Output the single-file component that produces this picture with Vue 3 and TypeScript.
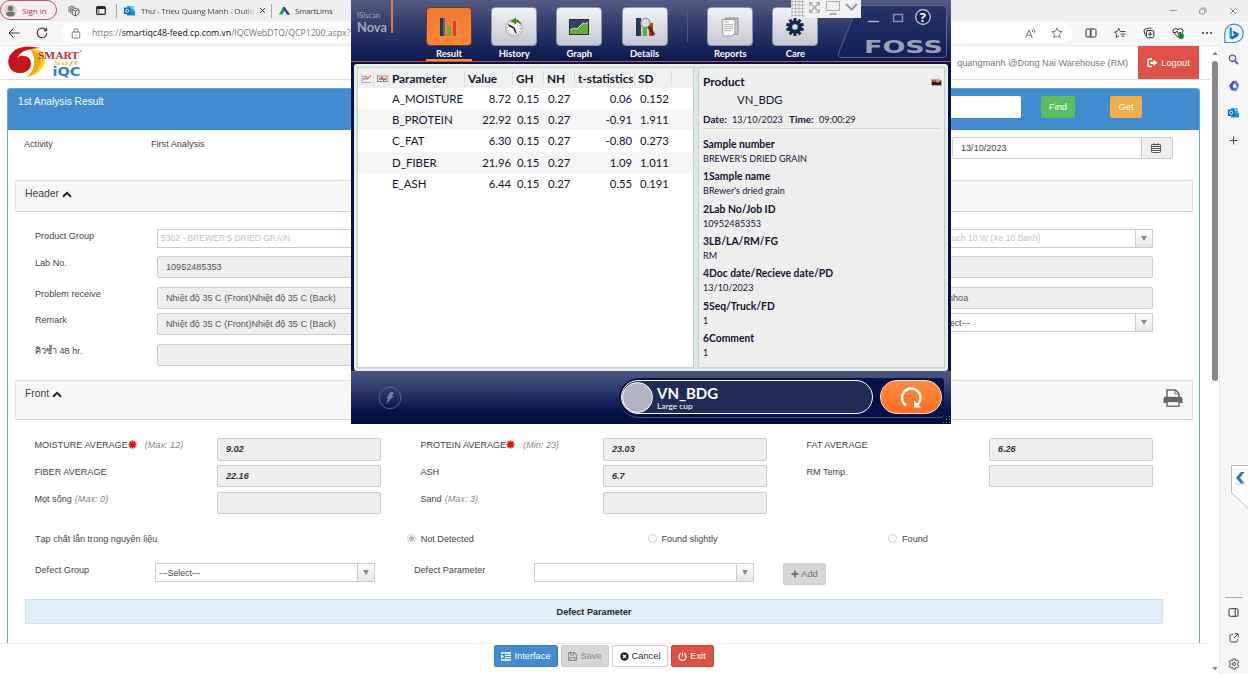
<script setup lang="ts">
interface Field { label: string; value: string; kind: 'input' | 'select' | 'muted' }
interface Average { label: string; hint: string; required: boolean; value: string }

const leftFields: Field[] = [
  { label: 'Product Group', value: "5302 - BREWER'S DRIED GRAIN", kind: 'muted' },
  { label: 'Lab No.', value: '10952485353', kind: 'input' },
  { label: 'Problem receive', value: 'Nhiệt độ 35 C (Front)Nhiệt độ 35 C (Back)', kind: 'input' },
  { label: 'Remark', value: 'Nhiệt độ 35 C (Front)Nhiệt độ 35 C (Back)', kind: 'input' },
  { label: 'คิวซ้ำ 48 hr.', value: '', kind: 'input' },
]
const rightFields: Field[] = [
  { label: '', value: 'uch 10 W (Xe 10 Banh)', kind: 'muted' },
  { label: '', value: '', kind: 'input' },
  { label: '', value: 'nhoa', kind: 'input' },
  { label: '', value: 'lect---', kind: 'select' },
]
const averages: Average[] = [
  { label: 'MOISTURE AVERAGE', hint: '(Max: 12)', required: true, value: '9.02' },
  { label: 'PROTEIN AVERAGE', hint: '(Min: 23)', required: true, value: '23.03' },
  { label: 'FAT AVERAGE', hint: '', required: false, value: '6.26' },
  { label: 'FIBER AVERAGE', hint: '', required: false, value: '22.16' },
  { label: 'ASH', hint: '', required: false, value: '6.7' },
  { label: 'RM Temp.', hint: '', required: false, value: '' },
  { label: 'Mọt sống', hint: '(Max: 0)', required: false, value: '' },
  { label: 'Sand', hint: '(Max: 3)', required: false, value: '' },
]
const results = [
  ['A_MOISTURE', '8.72', '0.15', '0.27', '0.06', '0.152'],
  ['B_PROTEIN', '22.92', '0.15', '0.27', '-0.91', '1.911'],
  ['C_FAT', '6.30', '0.15', '0.27', '-0.80', '0.273'],
  ['D_FIBER', '21.96', '0.15', '0.27', '1.09', '1.011'],
  ['E_ASH', '6.44', '0.15', '0.27', '0.55', '0.191'],
]
const details = [
  ['Sample number', "BREWER'S DRIED GRAIN"],
  ['1Sample name', "BRewer's dried grain"],
  ['2Lab No/Job ID', '10952485353'],
  ['3LB/LA/RM/FG', 'RM'],
  ['4Doc date/Recieve date/PD', '13/10/2023'],
  ['5Seq/Truck/FD', '1'],
  ['6Comment', '1'],
]
const tools = ['Result', 'History', 'Graph', 'Details', 'Reports', 'Care']
const teeth = [0, 36, 72, 108, 144, 180, 216, 252, 288, 324]
</script>

<template>
  <div class="shell">
    <header class="titlebar">
      <div class="signin">
        <svg width="13" height="13" viewBox="0 0 13 13"><circle cx="6.5" cy="6.5" r="6.3" fill="#d5d2d0" /><circle cx="6.5" cy="4.4" r="2.6" fill="#77716e" /><path d="M2.2 11Q2 7.8 4 7.8H9Q11 7.8 10.8 11Q6.500 14 2.200 11Z" fill="#77716e" /></svg>
        <span>Sign in</span>
      </div>
      <svg class="t-work" width="12" height="12" viewBox="0 0 12 12" fill="none" stroke="#555" stroke-width=".9"><path d="M4 4.500 8 3 11 4.500V8.500L7.500 11 4.500 9.500ZM4 4.500 7.500 6 11 4.500M7.500 6V11M2.800 8.500V3.300L7 1.600M1 7V2.300L5 .7" /></svg>
      <svg class="t-tabs" width="10" height="9" viewBox="0 0 10 9"><rect x=".7" y=".7" width="8.6" height="7.600" rx="1" fill="none" stroke="#222" stroke-width="1.200" /><path d="M.7 1H9.300V3H.7Z" fill="#222" /><path d="M2.800 3V8" stroke="#222" stroke-width=".7" /></svg>
      <i class="sep s1"></i>
      <svg class="t-outlook" width="11" height="11" viewBox="0 0 11 11"><path d="M3 1H10V7H3Z" fill="#28a8ea" /><path d="M6 1H10V4H6Z" fill="#50d9ff" /><path d="M3 6H11V10.500H3Z" fill="#1490df" /><rect y="2.500" width="6.500" height="6.500" rx=".6" fill="#0764b8" /><circle cx="3.200" cy="5.700" r="1.600" fill="none" stroke="#fff" /></svg>
      <span class="tab-outlook">Thư - Trieu Quang Manh - Outlo</span>
      <svg class="t-x" width="7" height="7" viewBox="0 0 7 7"><path d="M1 1 6 6M6 1 1 6" stroke="#444" /></svg>
      <i class="sep s2"></i>
      <svg class="t-lims" width="11" height="10" viewBox="0 0 11 10"><path d="M0 8.500 4.200.8 6 4 3.500 8.500Z" fill="#1e9b5a" /><path d="M3.800 1.500Q5 0 6 1.500L11 8.500Q8.500 9.800 7.300 7.500Z" fill="#12408a" /></svg>
      <span class="tab-lims">SmartLims</span>
      <div class="win-controls">
        <svg width="7" height="9" viewBox="0 0 7 9"><path d="M0 4.500H7" stroke="#999" /></svg>
        <svg width="8" height="8" viewBox="0 0 8 8" fill="none" stroke="#888" stroke-width=".9"><rect x=".7" y="2" width="5" height="5" rx="1" /><path d="M2.500 1H5.500Q7 1 7 2.500V5.500" /></svg>
        <svg width="8" height="8" viewBox="0 0 8 8"><path d="M1 1 7 7M7 1 1 7" stroke="#888" /></svg>
      </div>
    </header>

    <div class="addressbar">
      <svg class="a-back" width="12" height="10" viewBox="0 0 12 10" fill="none" stroke="#333"><path d="M11.500 5H1M5.200.8 1 5 5.200 9.200" /></svg>
      <svg class="a-reload" width="12" height="12" viewBox="0 0 12 12" fill="none" stroke="#333" stroke-width="1.100"><path d="M10.800 6A4.800 4.800 0 1 1 9 2.200L10.500 3.600M10.600.7V3.700H7.600" /></svg>
      <div class="url">
        <svg width="10" height="11" viewBox="0 0 10 11" fill="none" stroke="#666" stroke-width=".9"><rect x="1.200" y="4" width="7.600" height="6" rx="1" /><path d="M3 4V2.500Q3 .8 5 .8T7 2.500V4" /><circle cx="5" cy="7" r=".6" fill="#666" stroke="none" /></svg>
        <span>https://<b>smartiqc48-feed.cp.com.vn</b>/IQCWebDTO/QCP1200.aspx?</span>
        <svg class="a-read" width="11" height="11" viewBox="0 0 11 11" fill="none" stroke="#666" stroke-width=".9"><path d="M.7 10 4 2 7.300 10M1.800 7.200H6.200M6.700 1.500Q8 2.500 7.500 4M8.500.5Q10.500 2.500 9.500 5" /></svg>
        <svg class="a-star" width="12" height="12" viewBox="0 0 12 12" fill="none" stroke="#666" stroke-width=".9"><path d="M6 .9 7.500 4.200 11.200 4.600 8.400 7 9.200 10.700 6 8.800 2.800 10.700 3.600 7 .8 4.600 4.500 4.200Z" /></svg>
      </div>
      <div class="edge-tools">
        <svg width="12" height="12" viewBox="0 0 12 12" fill="none" stroke="#333"><rect x="1" y="2" width="4.300" height="8" rx="1" /><path d="M6.700 2H9.500Q11 2 11 3.500V8.500Q11 10 9.500 10H6.700M6 .8V11.200" /></svg>
        <svg width="12" height="12" viewBox="0 0 12 12" fill="none" stroke="#333" stroke-width=".9"><path d="M8 4.500H6.300L4.800 1.400 3.300 4.500.5 5 2.700 7.200 2.200 10.400 5 9M7.800 4.500H11.500M6.500 7H11.500M7.500 9.300H10" /></svg>
        <svg width="12" height="12" viewBox="0 0 12 12" fill="none" stroke="#333"><rect x="3.500" y="3.500" width="7.300" height="7.300" rx="1.500" /><path d="M5 7.100H9.300M7.100 5V9.200M2.500 8.500 1 4Q.7 2.800 1.800 2.500L6.500 1Q8 .7 8.500 2" /></svg>
        <svg width="12" height="12" viewBox="0 0 12 12" fill="none" stroke="#333"><path d="M6 10.300 1.700 6Q.2 4 1.700 2.200 3.800.6 6 2.700 8.200.6 10.300 2.200 11.800 4 10.300 6M1 5.500H4L5 4 6.500 7 7.500 5.500H9" /><circle cx="9" cy="9" r="2.900" fill="#1a8038" stroke="none" /></svg>
        <svg width="12" height="12" viewBox="0 0 12 12" fill="#333"><circle cx="2" cy="6" r="1" /><circle cx="6" cy="6" r="1" /><circle cx="10" cy="6" r="1" /></svg>
      </div>
    </div>

    <div class="workspace">
      <main class="page">
        <div class="page-scroll">
          <div class="brandbar">
            <svg class="brand" width="76" height="33" viewBox="0 0 76 33">
              <path d="M22 3Q36 2 37 13Q36 28 19 31Q31 24 29 14Q28 6 22 3Z" fill="#f8d81c" />
              <path d="M22 3Q37 8 31 21Q28 28 19 31Q27 24 26 14Q26 8 22 3Z" fill="#eda51a" />
              <path d="M32 2Q16-2 7 4Q-2 11 1 20Q4 28 14 27Q23 25 23 17Q22 10 16 10Q10 9 9 14Q10 3 32 2Z" fill="#c5161d" />
              <text x="30" y="12.500" class="logo-smart" textLength="41" lengthAdjust="spacingAndGlyphs">SMART</text>
              <path d="M72 5H73.500" stroke="#c52a2d" />
              <text x="45" y="19" class="logo-soft" textLength="25" lengthAdjust="spacingAndGlyphs">Soft</text>
              <text x="44.500" y="30" class="logo-iqc" textLength="28" lengthAdjust="spacingAndGlyphs">iQC</text>
            </svg>
            <span class="user">quangmanh @Dong Nai Warehouse (RM)</span>
            <button class="logout">
              <svg width="11" height="10" viewBox="0 0 11 10"><path d="M5 1H2.500Q1 1 1 2.500V7Q1 8.500 2.500 8.500H5" fill="none" stroke="#fff" stroke-width="1.500" /><path d="M3.500 3.700H6.300V1.500L10.500 4.800 6.300 8.100V6H3.500Z" fill="#fff" /></svg>Logout
            </button>
          </div>
          <section class="panel">
            <div class="panel-head">
              <span>1st Analysis Result</span>
              <div class="search"></div>
              <button class="btn find">Find</button>
              <button class="btn get">Get</button>
            </div>
            <div class="activity">
              <span class="act-l">Activity</span><span class="act-v">First Analysis</span>
              <div class="date"><span>13/10/2023</span><i><svg width="10" height="10" viewBox="0 0 10 10" fill="none" stroke="#444" stroke-width=".9"><rect x=".5" y="1.500" width="9" height="8" rx=".8" /><path d="M.5 3.500H9.500M.5 5.500H9.500M.5 7.500H9.500M3 .3V2.500M7 .3V2.500" /></svg></i></div>
            </div>
            <div class="fold fold-header">Header <svg width="10" height="7" viewBox="0 0 10 7"><path d="M1 5.800 5 1.900 9 5.800" fill="none" stroke="#222" stroke-width="2" /></svg></div>
            <div class="form">
              <div class="col-left">
                <div v-for="(f, i) in leftFields" :key="i" class="frow" :class="'r' + i">
                  <label>{{ f.label }}</label><div class="field" :class="f.kind">{{ f.value }}</div>
                </div>
              </div>
              <div class="col-right">
                <div v-for="(f, i) in rightFields" :key="i" class="frow" :class="'r' + i">
                  <div class="field" :class="f.kind"><span>{{ f.value }}</span><i v-if="f.kind !== 'input'" class="drop"></i></div>
                </div>
              </div>
            </div>
            <div class="fold fold-front">Front <svg width="10" height="7" viewBox="0 0 10 7"><path d="M1 5.800 5 1.900 9 5.800" fill="none" stroke="#222" stroke-width="2" /></svg>
              <svg class="printer" width="20" height="18" viewBox="0 0 20 18"><path d="M4 8V1H12.500L16 4.500V8" fill="#fff" stroke="#666" stroke-width="1.500" /><path d="M12 1V5H16" fill="none" stroke="#666" /><path d="M.5 14V10Q.5 7.800 2.500 7.800H17.500Q19.500 7.800 19.500 10V14Z" fill="#666" /><rect x="4" y="12.500" width="12" height="4.700" fill="#fff" stroke="#666" stroke-width="1.400" /></svg>
            </div>
            <div class="averages">
              <div v-for="a in averages" :key="a.label" class="avg">
                <div class="avg-l"><span>{{ a.label }}</span><svg v-if="a.required" width="9" height="9" viewBox="-4.500 -4.500 9 9"><path d="M0-4V4M-4 0H4M-2.800-2.800 2.800 2.800M2.800-2.800-2.800 2.800" stroke="#f00e0e" stroke-width="1.900" /></svg><em :class="{ wide: a.required }">{{ a.hint }}</em></div>
                <div class="field input strong">{{ a.value }}</div>
              </div>
            </div>
            <div class="radios">
              <span class="q">Tạp chất lẫn trong nguyên liệu</span>
              <span class="radio"><i class="on"></i>Not Detected</span>
              <span class="radio"><i></i>Found slightly</span>
              <span class="radio"><i></i>Found</span>
            </div>
            <div class="defects">
              <label class="d1">Defect Group</label>
              <div class="field select"><span>---Select---</span><i class="drop"></i></div>
              <label class="d2">Defect Parameter</label>
              <div class="field select"><span></span><i class="drop"></i></div>
              <button class="btn add"><svg width="8" height="8" viewBox="0 0 8 8"><path d="M4 .5V7.500M.5 4H7.500" stroke="#777" stroke-width="2" /></svg>Add</button>
            </div>
            <div class="table-head">Defect Parameter</div>
          </section>
          <footer class="actions">
            <button class="btn interface"><svg width="10" height="9" viewBox="0 0 10 9"><path d="M0 1H10M4 3.300H10M4 5.600H10M0 8H10" stroke="#fff" stroke-width="1.300" /><path d="M0 2.500 3 4.500 0 6.500Z" fill="#fff" /></svg>Interface</button>
            <button class="btn save"><svg width="9" height="9" viewBox="0 0 9 9" fill="none" stroke="#888"><path d="M.5.5H6.500L8.500 2.500V8.500H.5ZM2.500.5V3H6V.5M2 8.500V5.500H7V8.500" /></svg>Save</button>
            <button class="btn cancel"><svg width="9" height="9" viewBox="0 0 9 9"><circle cx="4.500" cy="4.500" r="4.200" fill="#222" /><path d="M3 3 6 6M6 3 3 6" stroke="#fff" stroke-width="1.300" /></svg>Cancel</button>
            <button class="btn exit"><svg width="9" height="9" viewBox="0 0 9 9" fill="none" stroke="#fff" stroke-width="1.200"><path d="M2.700 1.600A3.600 3.600 0 1 0 6.300 1.600M4.500.3V4.500" /></svg>Exit</button>
          </footer>
        </div>
        <div class="scrollbar">
          <svg width="6" height="5" viewBox="0 0 6 5"><path d="M3 .5 5.800 4H.2Z" fill="#888" /></svg>
          <i></i>
          <svg width="6" height="5" viewBox="0 0 6 5"><path d="M3 4.500 5.800 1H.2Z" fill="#888" /></svg>
        </div>
      </main>
      <aside class="sidebar">
        <svg class="sb1" width="11" height="11" viewBox="0 0 11 11"><circle cx="4.500" cy="4.300" r="3.200" fill="#dff1fa" stroke="#667" stroke-width="1.300" /><path d="M7 7 10 10" stroke="#a33bb8" stroke-width="1.800" /></svg>
        <svg class="sb2" width="12" height="12" viewBox="0 0 12 12"><path d="M5 .8H8.500L11.200 5.500 9.500 7.500 7 3.700H4Z" fill="#8a63e0" /><path d="M11.200 5.500 8.500 11H4.500L6 8.200 8 7.500Z" fill="#3d8fe8" /><path d="M5 .8 1 5.500 3.500 10.500 6.500 9.500 4.500 6 6 3.500Z" fill="#4750b4" /></svg>
        <svg class="sb3" width="11" height="11" viewBox="0 0 11 11"><path d="M3 1H10V7H3Z" fill="#28a8ea" /><path d="M6 1H10V4H6Z" fill="#50d9ff" /><path d="M3 6H11V10.500H3Z" fill="#1490df" /><rect y="2.500" width="6.500" height="6.500" rx=".6" fill="#0764b8" /><circle cx="3.200" cy="5.700" r="1.600" fill="none" stroke="#fff" /></svg>
        <svg class="sb4" width="9" height="9" viewBox="0 0 9 9"><path d="M4.500.5V8.500M.5 4.500H8.500" stroke="#444" /></svg>
        <i class="rule"></i>
        <svg class="sb5" width="11" height="9" viewBox="0 0 11 9" fill="none" stroke="#333"><rect x="1" y=".7" width="9" height="7.600" rx="1.200" /><path d="M7.200.7V8.300" /></svg>
        <svg class="sb6" width="10" height="10" viewBox="0 0 10 10" fill="none" stroke="#333" stroke-width=".9"><path d="M4 1.500H2.500Q1 1.500 1 3V7.500Q1 9 2.500 9H7Q8.500 9 8.500 7.500V6M5.500.8H9.200V4.500M9 1 5 5" /></svg>
        <svg class="sb7" width="12" height="12" viewBox="0 0 12 12" fill="none" stroke="#333" stroke-width=".9"><path d="M4.600 2.500 5.200.8H6.800L7.400 2.500 9.400 2 10.800 3.500 9.800 5V7L10.800 8.500 9.400 10 7.400 9.500 6.800 11.200H5.200L4.600 9.500 2.600 10 1.200 8.500 2.200 7V5L1.200 3.500 2.600 2Z" /><circle cx="6" cy="6" r="1.500" /></svg>
      </aside>
    </div>

    <svg class="bing" width="20" height="21" viewBox="0 0 20 21"><path d="M.8 19.500V10A9.200 9.200 0 1 1 10 19.500Z" fill="#edf7fd" stroke="#3c86cc" stroke-width="1.200" /><path d="M5.500 4 8 5V14L5.500 15Z" fill="#169bdf" /><path d="M8.500 7.500 14.500 10.200Q15.200 13 12.500 14.200L8 16.500 5.500 14.800 11 11.700 9.500 10.900Z" fill="#176bd0" /></svg>
    <svg class="side-tab" width="17" height="44" viewBox="0 0 17 44"><path d="M17 .5H.5V27.500L17 43.500" fill="#fff" stroke="#bbb" /><path d="M9.800 7H13.500L9 12.800 13.500 18.500H9.800L5 12.800Z" fill="#2080ae" /><path d="M4 19H14" stroke="#aac9dc" /></svg>

    <section class="nova">
      <div class="nova-top">
        <div class="nova-name"><small>ISIscan</small><strong>Nova</strong></div>
        <nav>
          <div v-for="t in tools" :key="t" class="tool" :class="t.toLowerCase()">
            <div class="tile">
              <svg v-if="t === 'Result'" width="20" height="20" viewBox="0 0 20 20"><path d="M1 1H6V19H1Z" fill="#263757" /><path d="M4 1H6V19H4Z" fill="#536a80" /><path d="M8 9H12V19H8Z" fill="#62ad37" /><path d="M14 4H19V19H14Z" fill="#dd4022" /><path d="M17 4H19V19H17Z" fill="#f58762" /></svg>
              <svg v-else-if="t === 'History'" width="20" height="20" viewBox="0 0 20 20"><circle cx="10" cy="11" r="8.300" fill="#f0f1ed" stroke="#aaa" /><circle cx="10" cy="11" r="6.600" fill="none" stroke="#666" stroke-dasharray="1 2.450" /><path d="M4.500 8 10 11 12 16" stroke="#222" stroke-width="1.500" fill="none" /><path d="M6.500 4 12 .5V2.500Q17 3 17 8Q15 5 12 5.300V7.500Z" fill="#478521" /></svg>
              <svg v-else-if="t === 'Graph'" width="20" height="16" viewBox="0 0 20 16"><rect x=".5" y=".5" width="19" height="15" fill="#344461" stroke="#222d40" /><path d="M1 11 5 9 8 10 14 4 16 5 19 3V15H1Z" fill="#66ad3c" /><path d="M1 11 5 9 8 10 14 4 16 5 19 3" fill="none" stroke="#cce3c0" /></svg>
              <svg v-else-if="t === 'Details'" width="20" height="20" viewBox="0 0 20 20"><path d="M1 1H6V19H1Z" fill="#263757" /><path d="M7.500 8H12V19H7.500Z" fill="#62ad37" /><path d="M14 6H18V19H14Z" fill="#b8391d" /><circle cx="10.500" cy="6" r="4.600" fill="#d8dfde" fill-opacity=".85" stroke="#8a9198" stroke-width="1.400" /><path d="M13.500 9.500 19 18" stroke="#632719" stroke-width="3" /></svg>
              <svg v-else-if="t === 'Reports'" width="18" height="20" viewBox="0 0 18 20"><path d="M4 1H17V17L4 19Z" fill="#c7c9ca" stroke="#888" /><path d="M1 2.500H14V16L11 19H2Z" fill="#f5f5f3" stroke="#999" /><path d="M3 5H8M3 7.500H12M3 9.500H12M3 11.500H12M3 13.500H10" stroke="#b5b5b5" /></svg>
              <svg v-else width="20" height="20" viewBox="-10 -10 20 20"><rect v-for="a in teeth" :key="a" x="-1.500" y="-9" width="3" height="5" fill="#14254f" :transform="`rotate(${a})`" /><circle r="4.800" fill="none" stroke="#14254f" stroke-width="4" /></svg>
            </div>
            <span>{{ t }}</span>
          </div>
        </nav>
        <svg class="foss" width="114" height="60" viewBox="0 0 114 60">
          <path d="M24 5.500H107Q110.500 5.500 110.500 9V53Q110.500 57.500 106 57.500H5Q1 57 3 52L20 10Q21 5.500 25 5.500Z" fill="#14235a" fill-opacity=".65" stroke="#59658e" />
          <path d="M32 21.500H43" stroke="#b9c0d2" stroke-width="1.300" /><rect x="57.500" y="14.500" width="9" height="7" fill="none" stroke="#8e96ad" stroke-width="1.400" /><circle cx="87" cy="17" r="7.300" fill="#17234e" stroke="#d1d5df" stroke-width="1.200" />
          <text x="83.800" y="21.800" class="foss-q">?</text><text x="28" y="53" class="foss-name" textLength="79" lengthAdjust="spacingAndGlyphs">FOSS</text>
        </svg>
      </div>
      <div class="nova-body">
        <div class="results">
          <div class="thead">
            <span class="ic"><svg width="11" height="9" viewBox="0 0 11 9" fill="none"><path d="M1 .5V8.500H10" stroke="#9ab" /><path d="M2 6 4 4 6 5 10 1.500" stroke="#d08060" stroke-width="1.200" /><path d="M2 3 5 2 8 5" stroke="#89a" /></svg></span>
            <span class="ic"><svg width="11" height="9" viewBox="0 0 11 9" fill="none"><path d="M.5 1V8M10 1V8M.5 2H10M.5 7.500H10" stroke="#998a84" /><path d="M2 5H4L5 3.500 6.500 6 8 5H9" stroke="#a34a35" stroke-width="1.300" /></svg></span>
            <span>Parameter</span><span>Value</span><span>GH</span><span>NH</span><span>t-statistics</span><span>SD</span><span></span>
          </div>
          <div v-for="r in results" :key="r[0]" class="trow"><span v-for="(c, i) in r" :key="i">{{ c }}</span></div>
        </div>
        <div class="product">
          <div class="product-head">
            <div class="ptitle"><b>Product</b><svg width="11" height="9" viewBox="0 0 11 9"><path d="M0 2H7L9 0 8 3H11V9H0Z" fill="#c0a491" /><path d="M1 4 4 3 6 6 10 4V8H1Z" fill="#20182a" /><path d="M1 3H4L6 5H1Z" fill="#d34a18" /></svg></div>
            <div class="pname">VN_BDG</div>
            <div class="pdate"><b>Date:</b><span>13/10/2023</span><b class="time">Time:</b><span>09:00:29</span></div>
          </div>
          <dl><div v-for="d in details" :key="d[0]"><dt>{{ d[0] }}</dt><dd>{{ d[1] }}</dd></div></dl>
        </div>
      </div>
      <div class="nova-bottom">
        <svg class="flash" width="24" height="24" viewBox="0 0 24 24"><circle cx="12" cy="12" r="10.800" fill="none" stroke="#5a6588" /><path d="M12 6H16L14 10H16L8 18 10 12.500H8.500Z" fill="#727c9d" /></svg>
        <div class="run">
          <div class="pill"><i></i><div><b>VN_BDG</b><span>Large cup</span></div></div>
          <div class="repeat"><svg width="26" height="24" viewBox="0 0 26 24"><path d="M8 20.500A9.300 9.300 0 1 1 18.500 20.500" fill="none" stroke="#fff" stroke-width="2.300" /><path d="M16 15.500V22.500H23Z" fill="#fff" /></svg></div>
        </div>
        <svg class="grip" width="8" height="8" viewBox="0 0 8 8" fill="#7d87a8"><path d="M6 0H7V1H6ZM6 3H7V4H6ZM3 3H4V4H3ZM6 6H7V7H6ZM3 6H4V7H3ZM0 6H1V7H0Z" /></svg>
      </div>
    </section>

    <div class="remote">
      <svg width="70" height="18" viewBox="0 0 70 18" fill="none"><path d="M1 0V17M4.500 0V17M8 0V17M11.500 0V17M0 1.500H13.500M0 5H13.500M0 8.500H13.500M0 12H13.500M0 15.500H13.500" stroke="#bbb" /><path d="M19 3 28 12M28 3 19 12" stroke="#aaa" stroke-width="1.500" /><path d="M18.500 6V2.500H22M25 2.500H28.500V6M28.500 9V12.500H25M22 12.500H18.500V9" stroke="#aaa" /><path d="M35.500 1.500H48.500V10.500H35.500ZM39 13.500H45M38 14.500H46" stroke="#aaa" /><path d="M55 4 60.500 9.500 66 4" stroke="#999" stroke-width="2" /></svg>
    </div>
  </div>
</template>

<style>
body { margin: 0; overflow: hidden; background: #fff; }
</style>
<style scoped>
* { box-sizing: border-box; }
svg { display: block; flex: none; }
button { font-family: inherit; font-size: inherit; margin: 0; padding: 0; }
.shell { position: relative; width: 1248px; height: 674px; overflow: hidden; font-family: "Liberation Sans", "Noto Sans", sans-serif; font-size: 9.1px; color: #444; }
.titlebar { height: 21px; background: #efefef; display: flex; align-items: center; font-family: "Open Sans", "Noto Sans", sans-serif; font-size: 8px; white-space: nowrap; }
.signin { width: 57px; height: 20px; margin-top: -1px; display: flex; align-items: center; gap: 5px; padding-left: 3px; border: 1px solid #b55b62; border-radius: 10px; background: #f5efef; color: #a33239; }
.t-work { margin-left: 11px; } .t-tabs { margin-left: 16px; }
.sep { width: 1px; height: 14px; background: #aaa; } .s1 { margin-left: 10px; } .s2 { margin-left: 5px; }
.t-outlook { margin-left: 7px; } .tab-outlook { width: 115px; margin-left: 6px; -webkit-mask-image: linear-gradient(90deg, #000 90%, transparent); letter-spacing: -.170px; }
.t-x { margin-left: 3px; } .t-lims { margin-left: 7px; } .tab-lims { margin-left: 5px; letter-spacing: -.250px; }
.win-controls { display: flex; gap: 22px; margin-left: auto; padding-right: 11px; align-items: center; }
.addressbar { height: 24px; background: #f7f7f7; display: flex; align-items: center; }
.a-back { margin-left: 8px; } .a-reload { margin-left: 16px; }
.url { width: 1012px; height: 20px; margin-left: 13px; background: #fff; border-radius: 10px; display: flex; align-items: center; padding: 0 10px; font-family: "Open Sans", "Noto Sans", sans-serif; font-size: 8.700px; color: #767676; }
.url span { margin-left: 11px; } .url b { font-weight: 400; color: #111; }
.a-read { margin-left: auto; } .a-star { margin-left: 15px; }
.edge-tools { display: flex; gap: 17px; margin-left: 12px; }
.workspace { display: flex; height: 629px; }
.page { width: 1219px; display: flex; border-top: 1px solid #e8e8e8; }
.page-scroll { width: 1210px; height: 628px; }
.scrollbar { width: 9px; display: flex; flex-direction: column; align-items: center; padding: 5px 0 3px; }
.scrollbar i { width: 6px; height: 320px; margin-top: 5px; border-radius: 3px; background: #888; }
.scrollbar svg:last-child { margin-top: auto; }
.sidebar { width: 29px; background: #f6f6f6; border-left: 1px solid #eaeaea; display: flex; flex-direction: column; align-items: center; padding-right: 1px; }
.sb1 { margin-top: 9px; } .sb2 { margin-top: 15px; } .sb3 { margin-top: 15px; } .sb4 { margin-top: 18px; }
.rule { width: 18px; height: 1px; background: #aaa; margin-top: 452px; } .sb5 { margin-top: 10px; } .sb6 { margin-top: 16px; } .sb7 { margin-top: 15px; }
.brandbar { height: 34px; border-bottom: 1px solid #ddd; display: flex; align-items: center; }
.brand { margin-left: 8px; }
.logo-smart { font: bold 10.500px "Liberation Serif", serif; fill: #c52a2d; }
.logo-soft { font: italic bold 7px "Liberation Serif", serif; fill: #efc244; }
.logo-iqc { font: bold 11.500px "DejaVu Sans", sans-serif; fill: #2e82ba; }
.user { margin-left: auto; font-size: 9.200px; color: #777; white-space: nowrap; }
.logout { width: 61px; height: 33px; margin: 0 11px 0 10px; display: flex; align-items: center; justify-content: center; gap: 3px; background: #de5149; border: 0; color: #fff; font-size: 9.300px; }
.panel { width: 1193px; height: 555px; margin: 8px 0 0 7px; border: 1px solid #68a5cd; border-bottom: 0; border-radius: 3px 3px 0 0; overflow: hidden; }
.panel-head { height: 41px; background: #428bce; color: #fff; display: flex; font-size: 10.200px; padding: 7px 0 0 10px; }
.search { width: 158px; height: 22px; margin: 0 0 0 755px; background: #fff; border-radius: 2px; }
.panel-head > span { width: 90px; white-space: nowrap; }
.btn { height: 22px; display: inline-flex; align-items: center; justify-content: center; border: 1px solid transparent; border-radius: 2px; color: #fff; font-size: 9.300px; gap: 3px; }
.panel-head .btn { flex: none; } .find { width: 34px; margin-left: 20px; background: #5cbd60; } .get { width: 32px; margin-left: 35px; background: #f3ad4e; }
.activity { height: 50px; display: flex; padding: 7px 0 0 16px; }
.act-l { width: 127px; padding-top: 2px; } .act-v { width: 802px; padding-top: 2px; }
.date { height: 22px; width: 221px; display: flex; border: 1px solid #ccc; border-radius: 2px; margin-left: -1px; align-items: center; padding-left: 8px; }
.date span { flex: 1; } .date i { width: 31px; height: 20px; display: flex; align-items: center; justify-content: center; border-left: 1px solid #ccc; background: #eee; padding-right: 3px; }
.fold { width: 1178px; margin-left: 7px; border: 1px solid #e0e0e0; border-bottom-color: #d5d5d5; border-radius: 2px; background: #f7f7f7; display: flex; align-items: flex-start; padding: 6.500px 9px; font-size: 10.400px; line-height: 12px; gap: 3px; }
.fold > svg { margin-top: 3px; } .fold-header { height: 32px; } .fold-front { height: 40px; }
.fold > .printer { margin: 1px 0 0 auto; }
.form { height: 168px; padding: 17px 0 0 27px; display: flex; }
.col-left { width: 400px; } .col-left label { width: 122px; line-height: 12px; padding-top: 1px; }
.col-right { width: 245px; margin-left: 473px; }
.frow { display: flex; align-items: flex-start; } .r0 { height: 27px; } .r1 { height: 31px; } .r2 { height: 26px; } .r3 { height: 31px; } .r4 { height: 22px; }
.r0 .field { height: 18.500px; }
.col-left .frow .field { flex: 1; } .col-right .field { width: 245px; }
.field { height: 22px; border: 1px solid #ccc; border-radius: 2px; display: flex; align-items: center; white-space: nowrap; }
.input { background: #eee; padding-left: 8px; color: #555; }
.muted, .select { height: 19px; padding-left: 3px; border-radius: 0; background: #fff; font-size: 8.700px; }
.muted { color: #c3c3c3; font-size: 8.500px; }
.col-right .field { padding-left: 39px; } .col-right .muted { padding-left: 43px; }
.field span { flex: 1; } .drop { width: 17px; height: 17px; background: linear-gradient(#fff, #e5e5e5); border-left: 1px solid #ccc; display: flex; align-items: center; justify-content: center; }
.drop::after { content: ""; border: 3.500px solid transparent; border-top: 5px solid #888; border-bottom: 0; }
.averages { height: 84px; margin: 18px 0 0 26.450px; width: 1158px; display: grid; grid-template-columns: repeat(3, 386px); grid-template-rows: repeat(3, 26.800px); }
.avg { display: flex; } .avg-l { width: 182.500px; height: 13px; padding-top: 1px; display: flex; align-items: center; color: #444; }
.avg-l svg { margin-top: -2px; }
.avg em { margin-left: 3px; color: #888; } .avg em.wide { margin-left: 8px; }
.avg .field { width: 164px; height: 22.500px; } .strong { font-weight: bold; font-style: italic; color: #333; }
.radios { display: flex; margin-top: 10px; height: 13px; padding-left: 27px; align-items: center; }
.q { width: 372px; } .radio { width: 240.700px; display: flex; align-items: center; gap: 4.700px; }
.radio i { width: 9px; height: 9px; border: 1px solid #ccc; border-radius: 50%; } .radio .on { background: radial-gradient(#bbb 0 2.200px, #fff 2.800px); }
.defects { display: flex; margin-top: 18px; height: 23px; padding-left: 27px; align-items: flex-start; }
.defects label { padding-top: 2px; } .d1 { width: 120px; } .d2 { width: 120px; margin-left: 39px; }
.defects .select { width: 220px; } .add { width: 43px; margin-left: 29px; background: #d6d6d6; border-color: #ccc; color: #777; gap: 2px; }
.table-head { width: 1138px; height: 25px; margin: 13px 0 0 17px; background: #dfeff8; border: 1px solid #cfe0ea; display: flex; align-items: center; justify-content: center; font-weight: bold; color: #222; }
.actions { height: 30px; border-top: 1px solid #eee; padding: 1px 0 0 494px; display: flex; gap: 3px; }
.actions .btn { font-size: 9.300px; }
.interface { width: 64px; background: #428bce; border-color: #357ebd; } .save { width: 48px; background: #d6d6d6; border-color: #ccc; color: #888; }
.cancel { width: 56px; background: #fff; border-color: #ccc; color: #333; } .exit { width: 43px; background: #de5149; border-color: #d43f3a; margin-left: -.500px; }
.bing { position: absolute; left: 1224px; top: 23px; } .side-tab { position: absolute; left: 1231px; top: 465px; }
.nova { position: absolute; left: 351px; top: 0; width: 600px; height: 424px; background: #061145; color: #111430; font-family: Lato, "Open Sans", sans-serif; }
.nova-top { height: 62px; border-bottom: 1px solid #c9583c; background: linear-gradient(#545c82, #2c396a 45%, #0a1a52) padding-box; display: flex; }
.nova-name { width: 42px; height: 33px; border-right: 2px solid #e07a35; padding: 11px 0 0 6px; color: #a1a9bf; display: flex; flex-direction: column; }
.nova-name small { font-size: 7.500px; line-height: 10px; } .nova-name strong { font-size: 12.800px; line-height: 13px; font-weight: 700; }
nav { display: flex; gap: 19.200px; margin-left: 33px; padding-top: 7px; }
.tool { width: 46px; height: 54px; display: flex; flex-direction: column; align-items: center; color: #fff; font-size: 9.400px; font-weight: 700; line-height: 12px; }
.tool.reports { margin-left: 20.500px; position: relative; } .tool.reports::before { content: ""; position: absolute; left: -20px; top: 4px; width: 1px; height: 31px; background: #4d5986; }
.tile { width: 46px; height: 39px; flex: none; margin-bottom: 2px; border-radius: 4px; background: linear-gradient(#f2f3f6, #c4c7d1); border: 1px solid #8f96ae; display: flex; align-items: center; justify-content: center; }
.result .tile { background: linear-gradient(#ef7b31, #ff8438); border-color: #6b3a2c; } .result { border-bottom: 2px solid #ff8738; }
.foss { margin-left: auto; margin-right: 1px; } .foss-q { font: bold 13px "Open Sans", sans-serif; fill: #fff; } .foss-name { font: bold 18px "DejaVu Sans", sans-serif; fill: #9aa1b7; }
.nova-body { height: 307px; margin: 2px 3px 0; border: 2px solid #e8eeee; border-radius: 3px; background: #dde5e5; display: flex; padding: 1px; gap: 4px; }
.results { width: 337px; background: #fff; border: 1px solid #c4d1d1; font-size: 11.300px; }
.thead { display: grid; height: 20px; background: #f0f0f0; grid-template-columns: 16px 15px 76px 48px 31px 31px 60px 37px 1fr; align-items: center; font-weight: 700; font-size: 11.800px; white-space: nowrap; padding-left: 0; }
.thead span { border-right: 1px solid #ddd; padding-left: 3px; height: 16px; display: flex; align-items: center; } .thead .ic { padding-left: 3px; } .thead span:last-child { border: 0; }
.trow { height: 21.200px; display: grid; grid-template-columns: 75px 44px 37px 31px 53px 38px; padding-left: 34px; align-items: center; }
.trow:nth-child(odd) { background: #f5f5f5; } .trow span:first-child { font-size: 11.450px; } .trow span:nth-child(2), .trow span:nth-child(5) { text-align: right; } .trow span:nth-child(3) { padding-left: 6px; } .trow span:nth-child(6) { padding-left: 8px; }
.product { width: 247px; flex: none; background: #eee; border: 1px solid #c4d1d1; border-radius: 2px; padding: 0 4px; font-size: 9.100px; }
.product-head { height: 61px; border-bottom: 1px solid #d5d5d5; padding-top: 5px; } .ptitle { display: flex; justify-content: space-between; font-size: 11.800px; line-height: 17px; margin-right: -2px; } .ptitle svg { margin-top: 4px; }
.pname { padding-left: 34px; line-height: 20.500px; font-size: 11.300px; } .pdate { display: flex; line-height: 17px; font-size: 9.200px; } .pdate b { width: 29px; font-size: 9.900px; } .pdate span { width: 57px; } .pdate .time { width: 30px; }
dl { margin: 8px 0 0; } dl div { height: 32.350px; } dt { font-weight: 700; font-size: 10.350px; line-height: 15px; } dd { margin: 0; line-height: 14px; white-space: nowrap; }
.nova-bottom { height: 53px; background: linear-gradient(#4f587f, #28366a 40%, #071449 75%, #030d3d); display: flex; align-items: center; padding-left: 27px; }
.run { width: 327px; height: 40px; margin-left: 217px; border-radius: 20px 4px 4px 20px; background: #061247; display: flex; align-items: center; gap: 7px; padding-left: 2px; border-bottom: 1px solid #46507a; }
.pill { width: 252px; height: 34px; border: 1.500px solid #fff; border-radius: 17px; background: #202c55; display: flex; align-items: center; gap: 4px; color: #fff; }
.pill > i { width: 31px; height: 31px; border: 1px solid #fff; border-radius: 50%; background: #b1b4c0; } .pill > div { display: flex; flex-direction: column; } .pill b { font-size: 15px; line-height: 17px; padding-top: 1px; } .pill span { font-size: 8.400px; line-height: 9px; }
.repeat { width: 62px; height: 34px; border: 1.500px solid #ffe1cc; border-radius: 17px; background: linear-gradient(#ff8a42, #ff6f24); display: flex; align-items: center; justify-content: center; }
.grip { align-self: flex-end; margin-left: -1px; }
.remote { position: absolute; left: 791px; top: 0; width: 70px; height: 18px; background: #f1f1f1; }
</style>
